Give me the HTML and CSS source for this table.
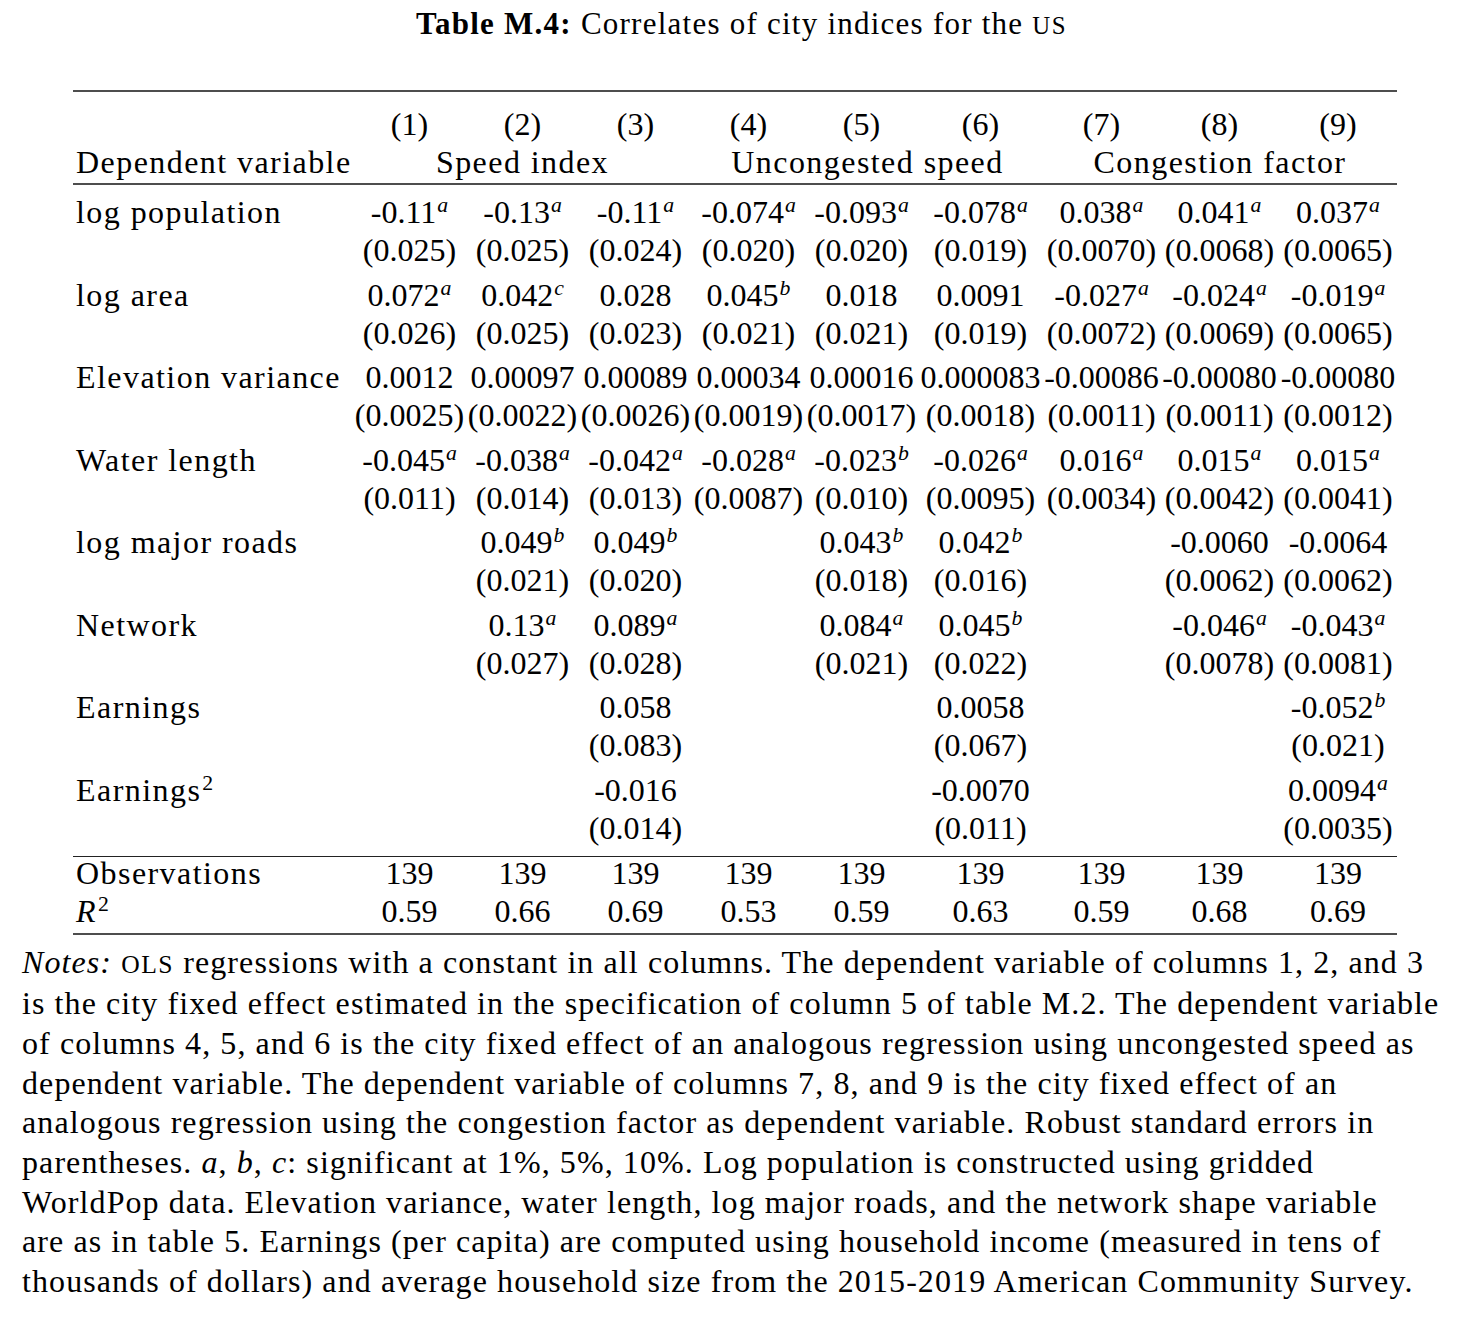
FILE: index.html
```html
<!DOCTYPE html>
<html lang="en">
<head>
<meta charset="utf-8">
<title>Table M.4</title>
<link rel="stylesheet" href="styles.css">
</head>
<body>
<div class="page">
  <h1 class="title"><b>Table M.4:</b> Correlates of city indices for the <span class="sc">US</span></h1>
  <table class="reg">
    <colgroup>
      <col class="c-lab"><col class="c-a"><col class="c-a"><col class="c-a"><col class="c-a"><col class="c-a"><col class="c-6"><col class="c-7"><col class="c-8"><col class="c-9">
    </colgroup>
    <thead>
      <tr class="hd1">
        <th class="lab"></th><th>(1)</th><th>(2)</th><th>(3)</th><th>(4)</th><th>(5)</th><th>(6)</th><th>(7)</th><th>(8)</th><th>(9)</th>
      </tr>
      <tr class="hd2">
        <th class="lab">Dependent variable</th>
        <th colspan="3" class="txt">Speed index</th>
        <th colspan="3" class="txt">Uncongested speed</th>
        <th colspan="3" class="txt">Congestion factor</th>
      </tr>
    </thead>
    <tbody>
      <tr class="coef first">
        <td class="lab">log population</td>
        <td>-0.11<sup>a</sup></td><td>-0.13<sup>a</sup></td><td>-0.11<sup>a</sup></td><td>-0.074<sup>a</sup></td><td>-0.093<sup>a</sup></td><td>-0.078<sup>a</sup></td><td>0.038<sup>a</sup></td><td>0.041<sup>a</sup></td><td>0.037<sup>a</sup></td>
      </tr>
      <tr class="se">
        <td class="lab"></td>
        <td>(0.025)</td><td>(0.025)</td><td>(0.024)</td><td>(0.020)</td><td>(0.020)</td><td>(0.019)</td><td>(0.0070)</td><td>(0.0068)</td><td>(0.0065)</td>
      </tr>
      <tr class="coef">
        <td class="lab">log area</td>
        <td>0.072<sup>a</sup></td><td>0.042<sup>c</sup></td><td>0.028</td><td>0.045<sup>b</sup></td><td>0.018</td><td>0.0091</td><td>-0.027<sup>a</sup></td><td>-0.024<sup>a</sup></td><td>-0.019<sup>a</sup></td>
      </tr>
      <tr class="se">
        <td class="lab"></td>
        <td>(0.026)</td><td>(0.025)</td><td>(0.023)</td><td>(0.021)</td><td>(0.021)</td><td>(0.019)</td><td>(0.0072)</td><td>(0.0069)</td><td>(0.0065)</td>
      </tr>
      <tr class="coef">
        <td class="lab">Elevation variance</td>
        <td>0.0012</td><td>0.00097</td><td>0.00089</td><td>0.00034</td><td>0.00016</td><td>0.000083</td><td>-0.00086</td><td>-0.00080</td><td>-0.00080</td>
      </tr>
      <tr class="se">
        <td class="lab"></td>
        <td>(0.0025)</td><td>(0.0022)</td><td>(0.0026)</td><td>(0.0019)</td><td>(0.0017)</td><td>(0.0018)</td><td>(0.0011)</td><td>(0.0011)</td><td>(0.0012)</td>
      </tr>
      <tr class="coef">
        <td class="lab">Water length</td>
        <td>-0.045<sup>a</sup></td><td>-0.038<sup>a</sup></td><td>-0.042<sup>a</sup></td><td>-0.028<sup>a</sup></td><td>-0.023<sup>b</sup></td><td>-0.026<sup>a</sup></td><td>0.016<sup>a</sup></td><td>0.015<sup>a</sup></td><td>0.015<sup>a</sup></td>
      </tr>
      <tr class="se">
        <td class="lab"></td>
        <td>(0.011)</td><td>(0.014)</td><td>(0.013)</td><td>(0.0087)</td><td>(0.010)</td><td>(0.0095)</td><td>(0.0034)</td><td>(0.0042)</td><td>(0.0041)</td>
      </tr>
      <tr class="coef">
        <td class="lab">log major roads</td>
        <td></td><td>0.049<sup>b</sup></td><td>0.049<sup>b</sup></td><td></td><td>0.043<sup>b</sup></td><td>0.042<sup>b</sup></td><td></td><td>-0.0060</td><td>-0.0064</td>
      </tr>
      <tr class="se">
        <td class="lab"></td>
        <td></td><td>(0.021)</td><td>(0.020)</td><td></td><td>(0.018)</td><td>(0.016)</td><td></td><td>(0.0062)</td><td>(0.0062)</td>
      </tr>
      <tr class="coef">
        <td class="lab">Network</td>
        <td></td><td>0.13<sup>a</sup></td><td>0.089<sup>a</sup></td><td></td><td>0.084<sup>a</sup></td><td>0.045<sup>b</sup></td><td></td><td>-0.046<sup>a</sup></td><td>-0.043<sup>a</sup></td>
      </tr>
      <tr class="se">
        <td class="lab"></td>
        <td></td><td>(0.027)</td><td>(0.028)</td><td></td><td>(0.021)</td><td>(0.022)</td><td></td><td>(0.0078)</td><td>(0.0081)</td>
      </tr>
      <tr class="coef">
        <td class="lab">Earnings</td>
        <td></td><td></td><td>0.058</td><td></td><td></td><td>0.0058</td><td></td><td></td><td>-0.052<sup>b</sup></td>
      </tr>
      <tr class="se">
        <td class="lab"></td>
        <td></td><td></td><td>(0.083)</td><td></td><td></td><td>(0.067)</td><td></td><td></td><td>(0.021)</td>
      </tr>
      <tr class="coef">
        <td class="lab">Earnings<sup class="up">2</sup></td>
        <td></td><td></td><td>-0.016</td><td></td><td></td><td>-0.0070</td><td></td><td></td><td>0.0094<sup>a</sup></td>
      </tr>
      <tr class="se last">
        <td class="lab"></td>
        <td></td><td></td><td>(0.014)</td><td></td><td></td><td>(0.011)</td><td></td><td></td><td>(0.0035)</td>
      </tr>
    </tbody>
    <tfoot>
      <tr class="obs">
        <td class="lab">Observations</td>
        <td>139</td><td>139</td><td>139</td><td>139</td><td>139</td><td>139</td><td>139</td><td>139</td><td>139</td>
      </tr>
      <tr class="r2">
        <td class="lab"><i>R</i><sup class="up">2</sup></td>
        <td>0.59</td><td>0.66</td><td>0.69</td><td>0.53</td><td>0.59</td><td>0.63</td><td>0.59</td><td>0.68</td><td>0.69</td>
      </tr>
    </tfoot>
  </table>
  <p class="notes"><i>Notes:</i> <span class="sc">OLS</span> regressions with a constant in all columns. The dependent variable of columns 1, 2, and 3<br>is the city fixed effect estimated in the specification of column 5 of table M.2. The dependent variable<br>of columns 4, 5, and 6 is the city fixed effect of an analogous regression using uncongested speed as<br>dependent variable. The dependent variable of columns 7, 8, and 9 is the city fixed effect of an<br>analogous regression using the congestion factor as dependent variable. Robust standard errors in<br>parentheses. <i>a</i>, <i>b</i>, <i>c</i>: significant at 1%, 5%, 10%. Log population is constructed using gridded<br>WorldPop data. Elevation variance, water length, log major roads, and the network shape variable<br>are as in table 5. Earnings (per capita) are computed using household income (measured in tens of<br>thousands of dollars) and average household size from the 2015-2019 American Community Survey.</p>
</div>
</body>
</html>
```

FILE: styles.css
```css
html, body {
  margin: 0;
  padding: 0;
  background: #ffffff;
  color: #000000;
  font-family: "Liberation Serif", "Times New Roman", serif;
}

.page {
  padding-top: 6px;
}

.title {
  margin: 0;
  text-align: center;
  font-size: 31px;
  line-height: 36px;
  font-weight: normal;
  letter-spacing: 0.04em;
}

.title b {
  font-weight: bold;
}

.sc {
  font-size: 0.8em;
  letter-spacing: 0.06em;
}

.reg {
  margin: 46px 0 0 73px;
  width: 1324px;
  border-collapse: collapse;
  table-layout: fixed;
  font-size: 32px;
}

.c-lab { width: 280px; }
.c-a { width: 113px; }
.c-6 { width: 125px; }
.c-7 { width: 117px; }
.c-8 { width: 119px; }
.c-9 { width: 118px; }

.reg th,
.reg td {
  padding: 0 0 6px 0;
  line-height: 32px;
  text-align: center;
  font-weight: normal;
  white-space: nowrap;
  vertical-align: top;
}

.reg .lab {
  text-align: left;
  padding-left: 3px;
  letter-spacing: 0.045em;
}

.reg .txt {
  letter-spacing: 0.045em;
}

.reg sup {
  font-style: italic;
  font-size: 0.68em;
  line-height: 0;
  vertical-align: 0.5em;
  padding-left: 1px;
}

.reg sup.up {
  font-style: normal;
  padding-left: 1px;
}

.hd1 th {
  border-top: 2px solid #4d4d4d;
  padding-top: 16px;
}

.hd2 th {
  border-bottom: 2px solid #4d4d4d;
  padding-bottom: 5px;
}

.coef td {
  padding-top: 6.5px;
}

.coef.first td {
  padding-top: 11px;
}

.se.last td {
  padding-bottom: 12px;
}

.obs td {
  border-top: 1px solid #222222;
}

.r2 td {
  border-bottom: 2px solid #4d4d4d;
}

.notes {
  margin: 8px 0 0 22px;
  font-size: 32px;
  line-height: 39.7px;
  letter-spacing: 0.034em;
  white-space: nowrap;
}

.notes .sc {
  font-size: 0.8em;
}
```
